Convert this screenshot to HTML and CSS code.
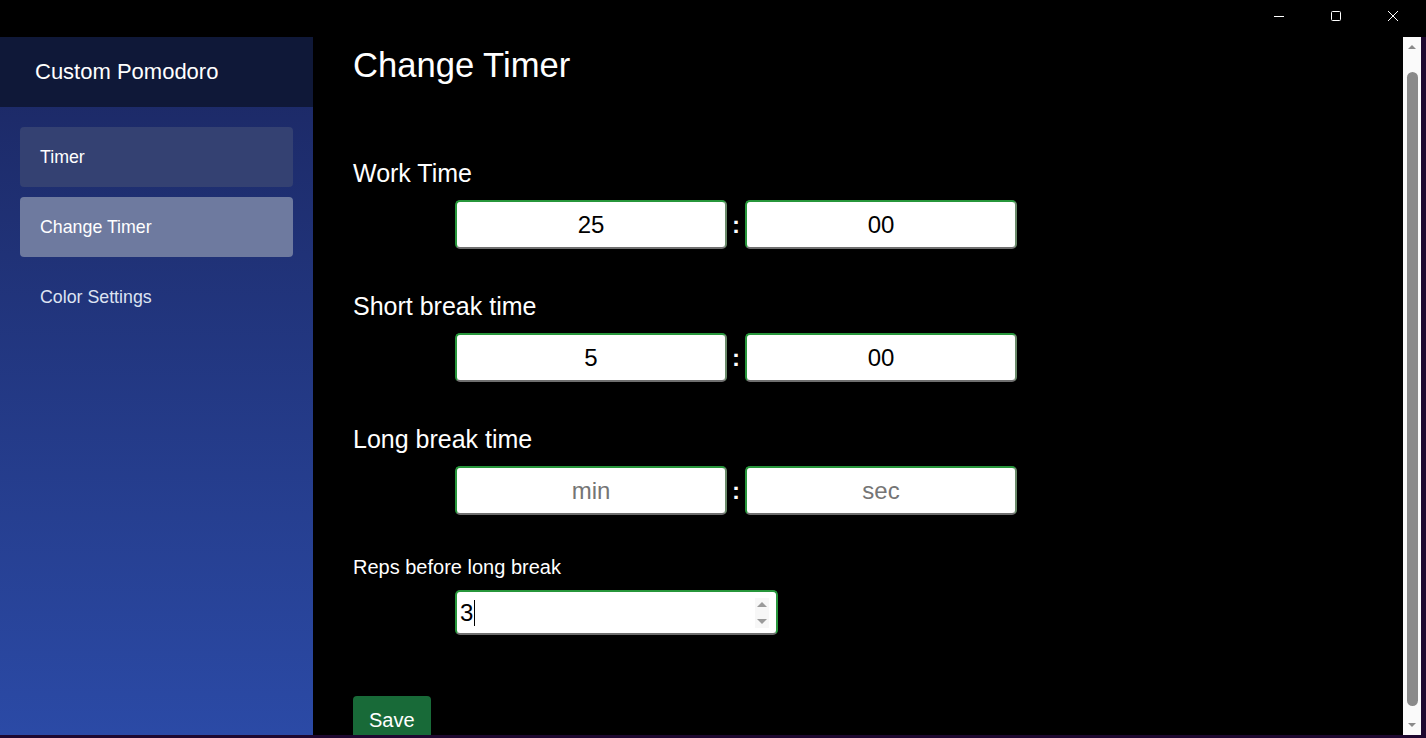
FILE: index.html
```html
<!DOCTYPE html>
<html lang="en">
<head>
<meta charset="utf-8">
<title>Custom Pomodoro</title>
<link rel="stylesheet" href="styles.css">
</head>
<body>
<div class="window">
  <div class="titlebar">
    <div class="controls">
      <span class="ctl"><svg width="12" height="12" viewBox="0 0 12 12"><path d="M1 6.5h10" stroke="#fff" stroke-width="1"/></svg></span>
      <span class="ctl"><svg width="12" height="12" viewBox="0 0 12 12"><rect x="1.5" y="1.5" width="9" height="9" rx="1" fill="none" stroke="#fff" stroke-width="1"/></svg></span>
      <span class="ctl"><svg width="12" height="12" viewBox="0 0 12 12"><path d="M1 1l10 10M11 1L1 11" stroke="#fff" stroke-width="1"/></svg></span>
    </div>
  </div>
  <div class="app">
    <aside class="sidebar">
      <div class="brand">Custom Pomodoro</div>
      <nav class="nav">
        <div class="nav-item nav-hover">Timer</div>
        <div class="nav-item nav-active">Change Timer</div>
        <div class="nav-item">Color Settings</div>
      </nav>
    </aside>
    <main class="main">
      <h1 class="title">Change Timer</h1>
      <section class="group first">
        <div class="label">Work Time</div>
        <div class="row">
          <div class="field">25</div><span class="colon">:</span><div class="field">00</div>
        </div>
      </section>
      <section class="group">
        <div class="label">Short break time</div>
        <div class="row">
          <div class="field">5</div><span class="colon">:</span><div class="field">00</div>
        </div>
      </section>
      <section class="group">
        <div class="label">Long break time</div>
        <div class="row">
          <div class="field placeholder">min</div><span class="colon">:</span><div class="field placeholder">sec</div>
        </div>
      </section>
      <section class="group reps">
        <div class="label small">Reps before long break</div>
        <div class="row">
          <div class="number">
            <span class="num-text">3</span><span class="caret"></span>
            <span class="spin"><svg width="14" height="30" viewBox="0 0 14 30"><path d="M2 9l5-5 5 5z" fill="#9a9a9a"/><path d="M2 21l5 5 5-5z" fill="#9a9a9a"/></svg></span>
          </div>
        </div>
      </section>
      <button class="save">Save</button>
    </main>
    <div class="scrollbar">
      <svg class="arrow" width="18" height="16" viewBox="0 0 18 16"><path d="M5 12l4-4 4 4z" fill="#8a8a8a"/></svg>
      <div class="track"><div class="thumb"></div></div>
      <svg class="arrow" width="18" height="16" viewBox="0 0 18 16"><path d="M5 4l4 4 4-4z" fill="#8a8a8a"/></svg>
    </div>
    <div class="edge"></div>
  </div>
  <div class="bottom-edge"></div>
</div>
</body>
</html>
```
FILE: styles.css
```css
* { box-sizing: border-box; }
html, body { margin: 0; padding: 0; background: #000; }
body { font-family: "Liberation Sans", Arial, sans-serif; color: #fff; overflow: hidden; }
.window { width: 1426px; height: 738px; display: flex; flex-direction: column; }
.titlebar { height: 37px; display: flex; justify-content: flex-end; background: #000; padding-right: 5px; }
.controls { display: flex; }
.ctl { width: 57px; height: 32px; display: flex; align-items: center; justify-content: center; }
.app { flex: 1; display: flex; min-height: 0; }
.sidebar { width: 313px; background: linear-gradient(180deg, #1b2762 0%, #2b4aa6 100%); display: flex; flex-direction: column; }
.brand { height: 70px; background: #0f1838; display: flex; align-items: center; padding-left: 35px; font-size: 22px; }
.nav { padding: 20px; display: flex; flex-direction: column; gap: 10px; }
.nav-item { height: 60px; border-radius: 4px; display: flex; align-items: center; padding-left: 20px; font-size: 17.8px; color: #dde3f2; }
.nav-hover { background: #344172; color: #fff; }
.nav-active { background: #6e7a9f; color: #fff; }
.main { flex: 1; overflow: hidden; padding-left: 40px; display: flex; flex-direction: column; align-items: flex-start; }
.title { margin: 8px 0 0; font-size: 34.6px; font-weight: normal; line-height: 40px; }
.group { margin-top: 43px; }
.group.first { margin-top: 74px; }
.group.reps { margin-top: 40px; }
.label { font-size: 25px; line-height: 28px; }
.label.small { font-size: 20px; line-height: 24px; }
.row { display: flex; align-items: center; margin-top: 13px; padding-left: 102px; }
.reps .row { margin-top: 11px; }
.field { width: 272px; height: 49px; background: #fff; border: 2px solid #27963b; border-bottom-color: #6f6f6f; border-right-color: #6a8a6a; border-radius: 5px; display: flex; align-items: center; justify-content: center; color: #000; font-size: 24px; }
.placeholder { color: #757575; }
.colon { width: 18px; text-align: center; font-size: 24px; font-weight: bold; color: #fff; }
.number { width: 323px; height: 45px; background: #fff; border: 2px solid #27963b; border-bottom-color: #6f6f6f; border-radius: 5px; display: flex; align-items: center; padding-left: 3px; color: #000; font-size: 24px; position: relative; }
.caret { width: 1px; height: 26px; background: #000; margin-left: 1px; }
.spin { position: absolute; right: 7px; top: 6px; display: flex; background: #f7f7f7; }
.save { margin-top: 61px; background: #186a38; color: #fff; border: 0; border-radius: 4px; font-family: "Liberation Sans", Arial, sans-serif; font-size: 20px; padding: 12px 16px 14px; line-height: 24px; flex-shrink: 0; }
.scrollbar { width: 18px; background: #fafafa; display: flex; flex-direction: column; }
.arrow { display: block; flex-shrink: 0; }
.track { flex: 1; padding: 19px 3px 13px 4px; }
.thumb { height: 100%; background: #8a8a8a; border-radius: 6px; }
.edge { width: 5px; background: #1e0830; }
.bottom-edge { height: 3px; background: #1e0830; }
```
